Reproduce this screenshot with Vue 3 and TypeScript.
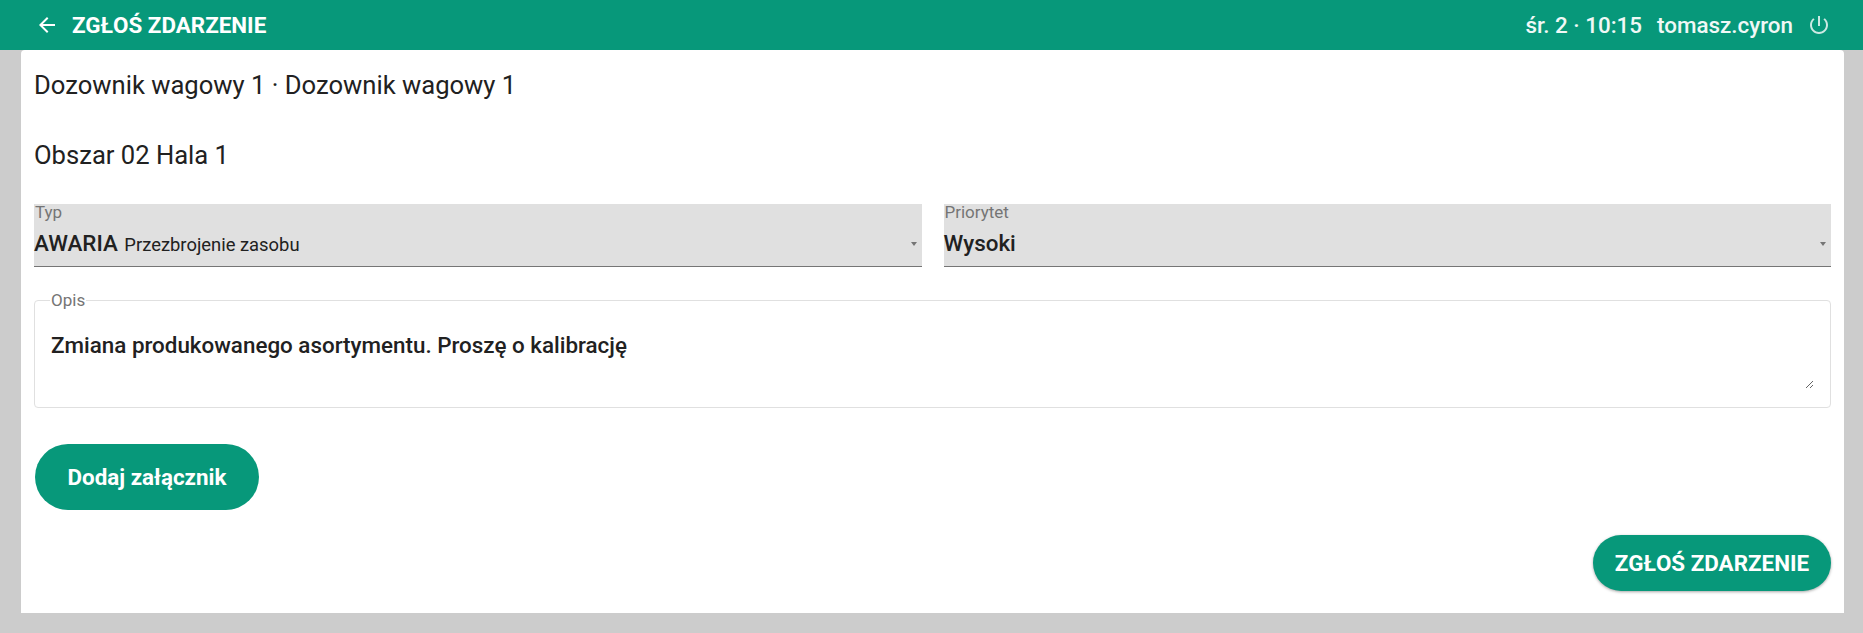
<script setup lang="ts">
const opis: string = 'Zmiana produkowanego asortymentu. Proszę o kalibrację'
</script>

<template>
  <div class="page">
    <header class="bar">
      <div class="bar-left">
        <svg class="back" viewBox="0 0 24 24" width="24" height="24"><path fill="currentColor" d="M20 11H7.83l5.59-5.59L12 4l-8 8 8 8 1.41-1.41L7.83 13H20v-2z"/></svg>
        <span class="bar-title">ZGŁOŚ ZDARZENIE</span>
      </div>
      <div class="bar-right">
        <span>śr. 2 · 10:15</span>
        <span>tomasz.cyron</span>
        <svg class="power" viewBox="0 0 24 24" width="24" height="24"><path fill="currentColor" d="M13 3h-2v10h2V3zm4.83 2.17l-1.42 1.42C17.99 7.86 19 9.81 19 12c0 3.87-3.13 7-7 7s-7-3.13-7-7c0-2.19 1.01-4.14 2.58-5.42L6.17 5.17C4.23 6.82 3 9.26 3 12c0 4.97 4.03 9 9 9s9-4.03 9-9c0-2.74-1.23-5.18-3.17-6.83z"/></svg>
      </div>
    </header>
    <main class="card">
      <h2 class="line first">Dozownik wagowy 1 · Dozownik wagowy 1</h2>
      <h2 class="line second">Obszar 02 Hala 1</h2>
      <div class="selects">
        <div class="select">
          <span class="label">Typ</span>
          <div class="value"><span class="main">AWARIA</span> <span class="sub">Przezbrojenie zasobu</span></div>
          <i class="arrow"></i>
        </div>
        <div class="select">
          <span class="label">Priorytet</span>
          <div class="value"><span class="main">Wysoki</span></div>
          <i class="arrow"></i>
        </div>
      </div>
      <fieldset class="opis">
        <legend>Opis</legend>
        <textarea class="area" :value="opis" rows="2"></textarea>
      </fieldset>
      <div class="attach"><button class="btn btn-attach" type="button">Dodaj załącznik</button></div>
      <div class="submit"><button class="btn btn-submit" type="button">ZGŁOŚ ZDARZENIE</button></div>
    </main>
  </div>
</template>

<style>
html, body { margin: 0; background: #cccccc; }
</style>

<style scoped>
.page {
  width: 1863px;
  height: 633px;
  background: #cccccc;
  font-family: Roboto, "Liberation Sans", sans-serif;
  color: #212121;
  overflow: hidden;
}
.bar {
  height: 50px;
  background: #07987a;
  color: #fff;
  display: flex;
  align-items: center;
  justify-content: space-between;
  padding: 0 32px 0 35px;
}
.bar-left { display: flex; align-items: center; gap: 13px; }
.back { width: 24px; height: 24px; }
.bar-title { font-size: 22.4px; font-weight: 700; }
.bar-right { display: flex; align-items: center; gap: 15px; font-size: 22.4px; font-weight: 500; color: #f0f8f6; }
.power { margin-left: -1px; opacity: .85; }
.card {
  margin: 0 19px 0 21px;
  height: 563px;
  background: #fff;
  padding: 0 13px;
  box-sizing: border-box;
  border-radius: 4px 4px 0 0;
}
.line { margin: 0; font-size: 25.6px; font-weight: 400; line-height: 32px; }
.first { padding-top: 19px; }
.second { padding-top: 38px; }
.selects { display: flex; gap: 22px; margin-top: 33px; }
.select {
  position: relative;
  flex: 1;
  height: 62px;
  background: #e0e0e0;
  border-bottom: 1px solid #757575;
}
.label { display: block; font-size: 17px; line-height: 16px; color: #757575; padding-left: 1px; }
.value { font-size: 22.4px; line-height: 28px; margin-top: 9px; }
.main { font-weight: 500; }
.sub { font-size: 18.4px; margin-left: 1px; }
.arrow {
  position: absolute;
  right: 5px;
  top: 38px;
  width: 0;
  height: 0;
  border-left: 3px solid transparent;
  border-right: 3px solid transparent;
  border-top: 4px solid #757575;
}
.opis {
  margin: 25px 0 0;
  padding: 0 16px;
  height: 116px;
  box-sizing: border-box;
  border: 1px solid #e0e0e0;
  border-radius: 4px;
  min-width: 0;
}
.opis legend { font-size: 17px; line-height: 16px; color: #757575; padding: 0 1px; margin-left: -1px; }
.area {
  display: block;
  width: 100%;
  height: 58px;
  margin-top: 23px;
  padding: 0;
  border: 0;
  outline: 0;
  font: 500 22.4px/28px Roboto, "Liberation Sans", sans-serif;
  color: #212121;
  background: transparent;
  box-sizing: border-box;
}
.btn {
  border: 0;
  background: #07987a;
  color: #fff;
  font-family: inherit;
  font-weight: 700;
  border-radius: 33px;
  cursor: pointer;
  padding: 0;
}
.attach { margin-top: 36px; }
.btn-attach { width: 224px; height: 66px; font-size: 22.4px; margin-left: 1px; }
.submit { display: flex; justify-content: flex-end; margin-top: 25px; }
.btn-submit {
  width: 238px;
  height: 56px;
  font-size: 22.4px;
  font-weight: 700;
  border-radius: 28px;
  box-shadow: 0 1px 3px rgba(0,0,0,.35);
}
</style>
